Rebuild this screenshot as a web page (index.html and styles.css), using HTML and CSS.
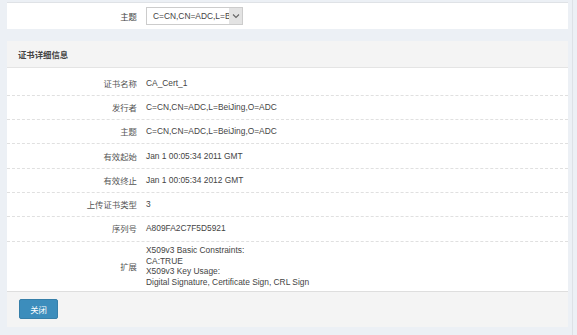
FILE: index.html
```html
<!DOCTYPE html>
<html lang="zh">
<head>
<meta charset="utf-8">
<title>证书详细信息</title>
<link rel="stylesheet" href="styles.css">
</head>
<body>
<div class="page">
  <div class="main">
    <div class="filter">
      <div class="filter-label">主题</div>
      <div class="select">
        <span class="select-text">C=CN,CN=ADC,L=BeiJing,O=ADC</span>
        <span class="select-arrow">
          <svg width="8" height="6" viewBox="0 0 8 6"><path d="M1 1.5 L4 4.5 L7 1.5" fill="none" stroke="#666" stroke-width="1.1"/></svg>
        </span>
      </div>
    </div>
    <div class="box">
      <div class="box-header">证书详细信息</div>
      <div class="box-body">
        <div class="row"><div class="lbl">证书名称</div><div class="val">CA_Cert_1</div></div>
        <div class="row"><div class="lbl">发行者</div><div class="val">C=CN,CN=ADC,L=BeiJing,O=ADC</div></div>
        <div class="row"><div class="lbl">主题</div><div class="val">C=CN,CN=ADC,L=BeiJing,O=ADC</div></div>
        <div class="row"><div class="lbl">有效起始</div><div class="val">Jan 1 00:05:34 2011 GMT</div></div>
        <div class="row"><div class="lbl">有效终止</div><div class="val">Jan 1 00:05:34 2012 GMT</div></div>
        <div class="row"><div class="lbl">上传证书类型</div><div class="val">3</div></div>
        <div class="row"><div class="lbl">序列号</div><div class="val">A809FA2C7F5D5921</div></div>
        <div class="row row-ext"><div class="lbl">扩展</div><div class="val val-multi">X509v3 Basic Constraints:<br>CA:TRUE<br>X509v3 Key Usage:<br>Digital Signature, Certificate Sign, CRL Sign</div></div>
      </div>
      <div class="box-footer"><button class="btn">关闭</button></div>
    </div>
  </div>
  <div class="gutter"><div class="gutter-line"></div></div>
</div>
</body>
</html>
```

FILE: styles.css
```css
html, body {
  margin: 0;
  padding: 0;
}
body {
  background: #ecf0f5;
  font-family: "Liberation Sans", "Noto Sans CJK SC", sans-serif;
  font-size: 8.4px;
  color: #333;
  height: 335px;
  overflow: hidden;
}
.page {
  display: flex;
  height: 335px;
}
.main {
  width: 561px;
  margin-left: 7px;
  padding-top: 2px;
}
.gutter {
  flex: 1;
  display: flex;
}
.gutter-line {
  width: 1px;
  margin-left: 4px;
  background: #dde1e6;
}
.filter {
  background: #fff;
  border-top: 1px solid #dfe2e6;
  height: 26px;
  display: flex;
  align-items: center;
}
.filter-label {
  width: 139px;
  text-align: right;
  padding-right: 9px;
  box-sizing: border-box;
  color: #444;
  font-family: "Noto Sans CJK SC", sans-serif;
}
.select {
  width: 97px;
  height: 18px;
  box-sizing: border-box;
  border: 1px solid #ccc;
  display: flex;
  align-items: center;
  background: #fff;
}
.select-text {
  flex: 1;
  overflow: hidden;
  white-space: nowrap;
  padding-left: 6px;
  color: #444;
}
.select-arrow {
  width: 13px;
  height: 16px;
  background: #e3e3e3;
  display: flex;
  align-items: center;
  justify-content: center;
}
.box {
  margin-top: 12px;
  background: #fff;
}
.box-header {
  height: 26px;
  line-height: 26px;
  background: #f4f4f4;
  border-bottom: 1px solid #e4e4e4;
  padding-left: 11px;
  font-weight: bold;
  color: #444;
  font-family: "Noto Sans CJK SC", sans-serif;
}
.box-body {
  padding-top: 3.6px;
}
.row {
  display: flex;
  align-items: center;
  padding: 6.15px 0;
  line-height: 11px;
  border-bottom: 1px dashed #e0e0e0;
}
.row-ext {
  border-bottom: none;
  padding: 3.5px 0 3px;
}
.lbl {
  width: 139px;
  text-align: right;
  padding-right: 9px;
  box-sizing: border-box;
  color: #555;
  font-family: "Noto Sans CJK SC", sans-serif;
}
.val {
  color: #444;
}
.val-multi {
  line-height: 10.7px;
}
.box-footer {
  background: #f4f4f4;
  border-top: 1px solid #dedede;
  padding: 7px 12px 8px;
}
.btn {
  width: 39px;
  height: 20px;
  background: #3c8dbc;
  border: 1px solid #367fa9;
  border-radius: 2px;
  color: #fff;
  font-family: "Noto Sans CJK SC", sans-serif;
  font-size: 8.4px;
  padding: 0;
  display: block;
}
```
